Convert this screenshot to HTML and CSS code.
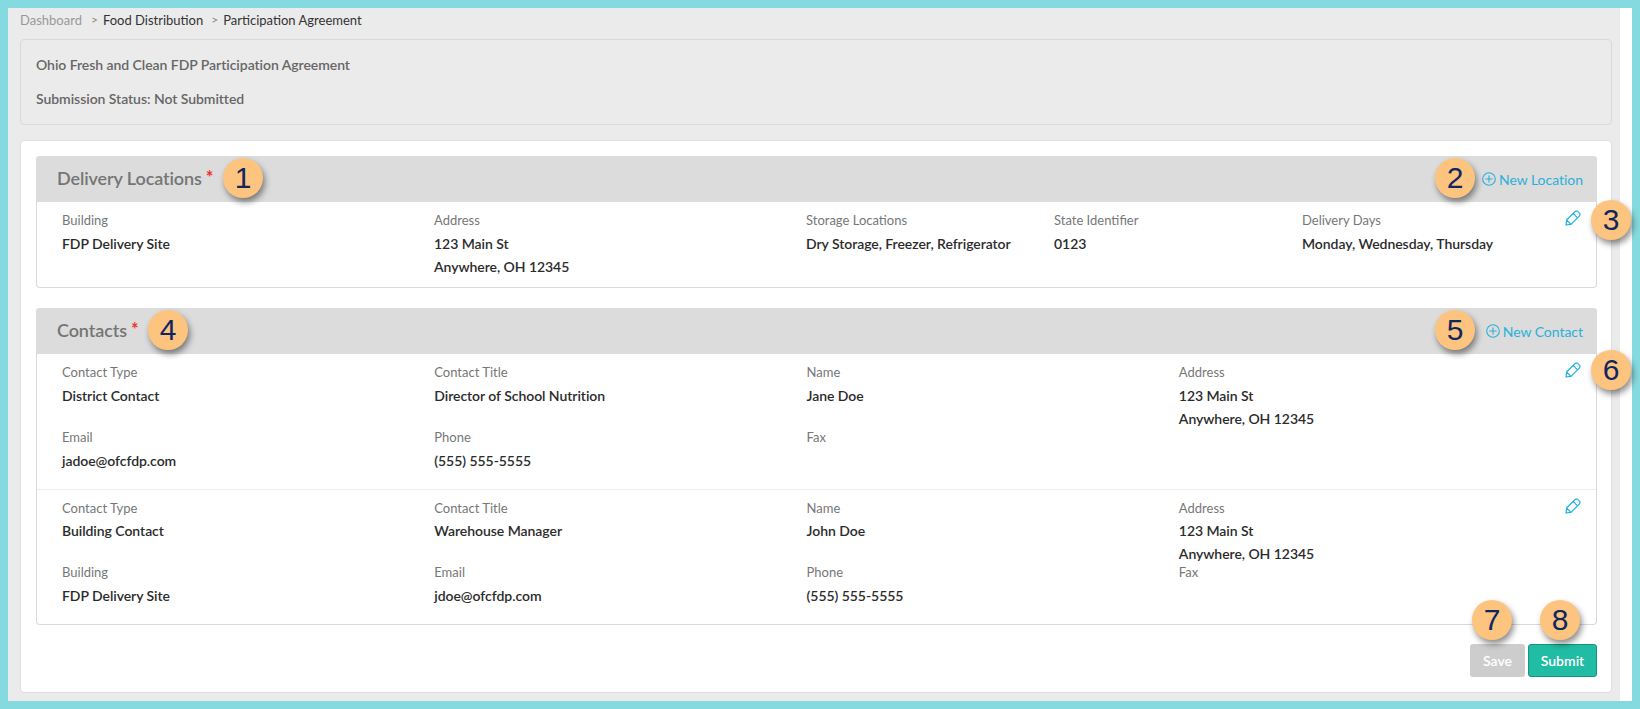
FILE: index.html
```html
<!DOCTYPE html>
<html lang="en">
<head>
<meta charset="utf-8">
<title>Participation Agreement</title>
<link rel="stylesheet" href="styles.css">
</head>
<body>
<div class="frame">
  <main class="page">
    <nav class="crumbs"><span class="crumb-root">Dashboard</span><span class="sep">&gt;</span><span>Food Distribution</span><span class="sep">&gt;</span><span>Participation Agreement</span></nav>
    <section class="info">
      <p>Ohio Fresh and Clean FDP Participation Agreement</p>
      <p>Submission Status: Not Submitted</p>
    </section>
    <section class="card">
      <div class="panel">
        <header class="panel-head">
          <h2>Delivery Locations<span class="req">*</span></h2>
          <a class="add"><svg class="plus" viewBox="0 0 14 14"><circle cx="7" cy="7" r="6.3"/><path d="M7 3.4v7.2M3.4 7h7.2"/></svg>New Location</a>
        </header>
        <div class="rec rec-loc">
          <div class="cell s3"><label>Building</label><b>FDP Delivery Site</b></div>
          <div class="cell s3"><label>Address</label><b>123 Main St<br>Anywhere, OH 12345</b></div>
          <div class="cell s2"><label>Storage Locations</label><b>Dry Storage, Freezer, Refrigerator</b></div>
          <div class="cell s2"><label>State Identifier</label><b>0123</b></div>
          <div class="cell s2"><label>Delivery Days</label><b>Monday, Wednesday, Thursday</b></div>
          <svg class="pen" viewBox="0 0 16 16"><path d="M1 15l.6-5L9.6 2l1.4-1 1.4.1 2.5 2.5.1 1.4-1 1.4-8 8zM1.600 10l4.400 4.400M8.200 3.400l4.400 4.400"/></svg>
        </div>
      </div>
      <div class="panel panel-contacts">
        <header class="panel-head">
          <h2>Contacts<span class="req">*</span></h2>
          <a class="add"><svg class="plus" viewBox="0 0 14 14"><circle cx="7" cy="7" r="6.3"/><path d="M7 3.4v7.2M3.4 7h7.2"/></svg>New Contact</a>
        </header>
        <div class="rec rec-contact">
          <div class="cell s3"><label>Contact Type</label><b>District Contact</b></div>
          <div class="cell s3"><label>Contact Title</label><b>Director of School Nutrition</b></div>
          <div class="cell s3"><label>Name</label><b>Jane Doe</b></div>
          <div class="cell s3"><label>Address</label><b>123 Main St<br>Anywhere, OH 12345</b></div>
          <div class="cell s3"><label>Email</label><b>jadoe@ofcfdp.com</b></div>
          <div class="cell s3"><label>Phone</label><b>(555) 555-5555</b></div>
          <div class="cell s3"><label>Fax</label></div>
          <svg class="pen" viewBox="0 0 16 16"><path d="M1 15l.6-5L9.6 2l1.4-1 1.4.1 2.5 2.5.1 1.4-1 1.4-8 8zM1.600 10l4.400 4.400M8.200 3.400l4.400 4.400"/></svg>
        </div>
        <div class="rec rec-contact rec-last">
          <div class="cell s3"><label>Contact Type</label><b>Building Contact</b></div>
          <div class="cell s3"><label>Contact Title</label><b>Warehouse Manager</b></div>
          <div class="cell s3"><label>Name</label><b>John Doe</b></div>
          <div class="cell s3"><label>Address</label><b>123 Main St<br>Anywhere, OH 12345</b></div>
          <div class="cell s3"><label>Building</label><b>FDP Delivery Site</b></div>
          <div class="cell s3"><label>Email</label><b>jdoe@ofcfdp.com</b></div>
          <div class="cell s3"><label>Phone</label><b>(555) 555-5555</b></div>
          <div class="cell s3"><label>Fax</label></div>
          <svg class="pen" viewBox="0 0 16 16"><path d="M1 15l.6-5L9.6 2l1.4-1 1.4.1 2.5 2.5.1 1.4-1 1.4-8 8zM1.600 10l4.400 4.400M8.200 3.400l4.400 4.400"/></svg>
        </div>
      </div>
      <div class="actions">
        <button class="btn btn-save">Save</button>
        <button class="btn btn-submit">Submit</button>
      </div>
    </section>
  </main>
  <div class="gutter"></div>
  <span class="badge b1">1</span>
  <span class="badge b2">2</span>
  <span class="badge b3">3</span>
  <span class="badge b4">4</span>
  <span class="badge b5">5</span>
  <span class="badge b6">6</span>
  <span class="badge b7">7</span>
  <span class="badge b8">8</span>
</div>
</body>
</html>
```
FILE: styles.css
```css
* { box-sizing: border-box; }
html, body { margin: 0; height: 709px; overflow: hidden; }
body { font-family: Lato, "Open Sans", sans-serif; font-size: 14px; color: #333; background: #84dadf; }

.frame {
  position: relative;
  width: 1640px;
  height: 709px;
  border: 8px solid #84dadf;
  display: flex;
  background: #fff;
}
.page {
  width: 1612px;
  height: 693px;
  background: #ebebeb;
  padding: 0 8px 0 12px;
  overflow: hidden;
}
.gutter { width: 12px; background: #fff; }

.crumbs { height: 31px; display: flex; align-items: flex-start; font-size: 13px; color: #333; padding-top: 4px; line-height: 16px; }
.crumb-root { color: #999; margin-right: 1px; }
.sep { color: #888; margin: 0 5px 0 8px; font-size: 12px; }

.info {
  height: 86px;
  border: 1px solid #d8d8d8;
  border-radius: 4px;
  padding: 16px 15px;
  font-weight: 600;
  font-size: 14px;
  letter-spacing: -.05px;
  color: #666;
}
.info p { margin: 0 0 17px; line-height: 17px; }

.card {
  margin-top: 15px;
  height: 553px;
  background: #fff;
  border: 1px solid #ddd;
  border-radius: 4px;
  padding: 15px 14px 0 15px;
}

.panel { border: 1px solid #d9d9d9; border-top: 0; border-radius: 4px; height: 132px; }
.panel-contacts { margin-top: 20px; height: 317px; }
.panel-head {
  height: 46px;
  margin: 0 -1px;
  background: #dcdcdc;
  border-radius: 4px 4px 0 0;
  display: flex;
  align-items: center;
  justify-content: space-between;
  padding: 0 14px 0 21px;
}
.panel-head h2 { margin: 0 0 2px; font-size: 18px; font-weight: 600; color: #757575; display: flex; letter-spacing: -.1px; }
.req { color: #e33; font-size: 18px; font-weight: 700; margin-left: 4px; line-height: 20px; }
.add { display: flex; align-items: center; color: #2bb0d8; font-size: 14px; letter-spacing: -.03px; }
.plus { width: 14px; height: 14px; margin-right: 3px; fill: none; stroke: #2bb0d8; stroke-width: 1.1; }

.rec {
  position: relative;
  display: grid;
  grid-template-columns: repeat(12, 124px);
  padding: 8px 0 0 25px;
}
.rec-contact { grid-template-columns: repeat(12, 124.1px); grid-auto-rows: 65px; height: 136px; border-bottom: 1px solid #eee; padding-top: 8px; }
.rec-last { border-bottom: 0; height: 135px; padding-top: 7px; }
.rec-last .cell:nth-child(-n+4) label { margin-top: 1px; margin-bottom: 1px; }
.s2 { grid-column: span 2; }
.s3 { grid-column: span 3; }
.cell label { display: block; color: #777; font-size: 13px; line-height: 20px; margin-bottom: 2px; }
.cell b { display: block; font-weight: 600; font-size: 14px; letter-spacing: -.05px; line-height: 23px; color: #2b2b2b; }

.pen { position: absolute; top: 8px; right: 15px; width: 16px; height: 16px; fill: none; stroke: #1fb0e0; stroke-width: 1.2; stroke-linejoin: round; }

.actions { display: flex; justify-content: flex-end; gap: 3px; margin-top: 19px; }
.btn { height: 33px; border-radius: 3px; border: 1px solid transparent; font: 600 14px Lato, sans-serif; color: #fff; padding: 0; }
.btn-save { width: 55px; background: #cdcdcd; }
.btn-submit { width: 69px; background: #20bca3; border-color: #15937f; }

.badge {
  position: absolute;
  width: 40px;
  height: 40px;
  border-radius: 50%;
  background: #fdc47f;
  color: #10265f;
  font: 30px/40px "Liberation Sans", Arial, sans-serif;
  text-align: center;
  box-shadow: 2px 4px 6px rgba(0, 0, 0, .45);
}
.b1 { left: 215px; top: 150px; }
.b2 { left: 1427px; top: 150px; }
.b3 { left: 1583px; top: 192px; }
.b4 { left: 140px; top: 302px; }
.b5 { left: 1427px; top: 302px; }
.b6 { left: 1583px; top: 342px; }
.b7 { left: 1464px; top: 592px; }
.b8 { left: 1532px; top: 592px; }
```
